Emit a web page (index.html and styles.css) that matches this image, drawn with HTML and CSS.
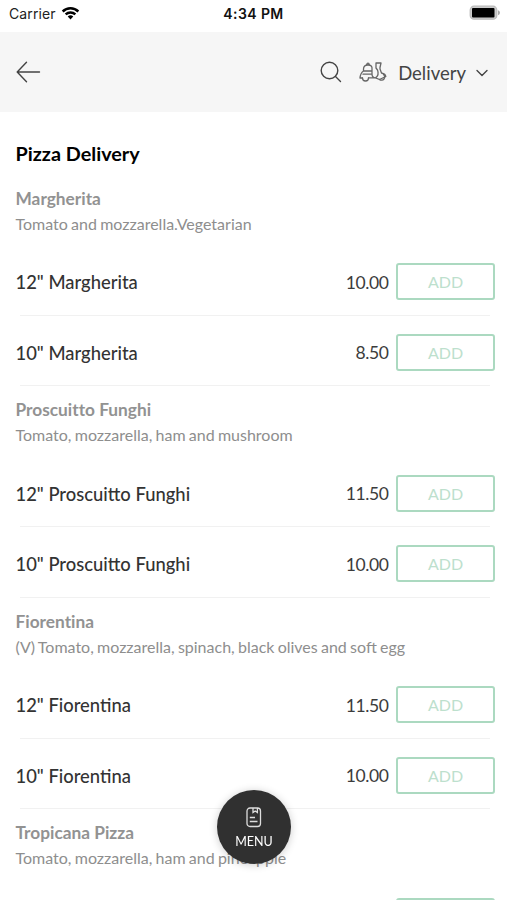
FILE: index.html
```html
<!DOCTYPE html>
<html lang="en">
<head>
<meta charset="utf-8">
<title>Pizza Delivery</title>
<link rel="stylesheet" href="styles.css">
</head>
<body>
<div class="status">
  <div class="carrier"><span>Carrier</span>
    <svg width="19" height="14" viewBox="0 0 18 14"><path d="M0.3 4.6A12.3 12.3 0 0 1 17.700 4.600L16 6.400A10 10 0 0 0 2 6.400ZM3.300 7.600A8.100 8.100 0 0 1 14.700 7.600L13 9.300A5.800 5.800 0 0 0 5 9.300ZM6.200 10.600A4 4 0 0 1 11.800 10.600L9 13.500Z"/></svg>
  </div>
  <div class="time">4:34 PM</div>
  <svg class="battery" width="32" height="16" viewBox="0 0 32 16"><rect x="1.200" y="1.200" width="26.600" height="13" rx="3.800" fill="#ccc" stroke="#bbb" stroke-width="1.200"/><rect x="3" y="3" width="22.500" height="9.600" rx="1"/><path d="M29 5.200Q31 6 31 7.700T29 10.200Z" fill="#aaa"/></svg>
</div>
<header class="bar">
  <svg class="back" width="26" height="22" viewBox="0 0 26 22"><path d="M23.500 11H1.500M10.500 1.200L1.200 11L10.500 20.800"/></svg>
  <svg class="search" width="22" height="22" viewBox="0 0 22 22"><circle cx="9.500" cy="9.500" r="8.300"/><path d="M15.500 15.500L20.500 20.500"/></svg>
  <svg class="scooter" width="28" height="20" viewBox="0 0 28 20"><path d="M4.500 9V7Q4.500 3 9 3T13 7V9ZM7.800 2.800Q7.800 1.200 9 1.200T10.200 2.800M4.500 9H13V12Q13 15.800 16.500 15.800Q20.500 13 18.500 8L17 6V1H22L21 5.500V7L22.500 11Q26.500 12 26.800 14.500L20.500 17.500L16.500 15.800H9.500M4.500 9Q1.500 11 1 16H3.500M4 12.200H12.500"/><path d="M3.500 16A3 3 0 0 0 9.500 16M20.500 17.500A3.100 3.100 0 1 0 24.500 12.500"/></svg>
  <span class="mode">Delivery</span>
  <svg class="chev" width="14" height="10" viewBox="0 0 14 10"><path d="M2 2.500L7 7.500L12 2.500"/></svg>
</header>
<main>
  <h1>Pizza Delivery</h1>
  <section>
    <div class="head"><h2>Margherita</h2><p>Tomato and mozzarella.Vegetarian</p></div>
    <div class="row"><span class="name">12" Margherita</span><span class="price">10.00</span><button>ADD</button></div>
    <div class="row"><span class="name">10" Margherita</span><span class="price">8.50</span><button>ADD</button></div>
  </section>
  <section>
    <div class="head"><h2>Proscuitto Funghi</h2><p>Tomato, mozzarella, ham and mushroom</p></div>
    <div class="row"><span class="name">12" Proscuitto Funghi</span><span class="price">11.50</span><button>ADD</button></div>
    <div class="row"><span class="name">10" Proscuitto Funghi</span><span class="price">10.00</span><button>ADD</button></div>
  </section>
  <section>
    <div class="head"><h2>Fiorentina</h2><p>(V) Tomato, mozzarella, spinach, black olives and soft egg</p></div>
    <div class="row"><span class="name">12" Fiorentina</span><span class="price">11.50</span><button>ADD</button></div>
    <div class="row"><span class="name">10" Fiorentina</span><span class="price">10.00</span><button>ADD</button></div>
  </section>
  <section>
    <div class="head"><h2>Tropicana Pizza</h2><p>Tomato, mozzarella, ham and pineapple</p></div>
    <div class="row"><span class="name"></span><span class="price"></span><button></button></div>
  </section>
</main>
<div class="menu">
  <svg width="16" height="21" viewBox="0 0 16 21"><rect x="1" y="1" width="13.500" height="18.500" rx="3"/><path d="M7 1V5.500L9.200 4L11.400 5.500V1M3.800 10.500H9M3.800 14.500H11.500"/></svg>
  <span>MENU</span>
</div>
</body>
</html>
```
FILE: styles.css
```css
* { box-sizing: border-box; }
body { margin: 0; height: 900px; overflow: hidden; background: #fff; font-family: Lato, sans-serif; color: #333; }
svg { display: block; flex: none; }
.status { height: 32px; display: grid; grid-template-columns: 1fr auto 1fr; padding: 0 7px 5px 9px; align-items: center; font-family: Inter, sans-serif; }
.carrier { display: flex; align-items: center; gap: 5px; font-size: 14px; letter-spacing: .1px; color: #222; }
.carrier svg { margin-top: -2px; fill: #000; }
.time { font-size: 14px; font-weight: 600; letter-spacing: .4px; margin-left: -2px; color: #111; }
.battery { justify-self: end; margin: -1px -1px 0 0; }
.bar { height: 80px; background: #f6f6f6; display: flex; align-items: center; padding: 0 18px 0 16px; }
.bar svg { fill: none; stroke: #444; stroke-width: 1.4; stroke-linecap: round; stroke-linejoin: round; }
.bar .search { margin-left: auto; }
.bar .scooter { margin-left: 17px; stroke: #666; stroke-width: 1.3; }
.mode { margin-left: 11px; margin-top: 1px; font-size: 18.500px; color: #444; }
.bar .chev { margin-left: 9px; margin-top: 2px; }
main { height: 788px; overflow: hidden; padding: 0 12px 0 15.500px; }
h1 { margin: 0; height: 62.700px; padding-top: 29px; line-height: 24px; font-size: 19.800px; font-weight: 700; color: #000; }
.head { height: 70.500px; padding-top: 12px; }
h2 { margin: 0; font-size: 17.300px; line-height: 24px; font-weight: 700; font-variant-ligatures: none; color: #929292; }
.head p { margin: 2px 0 0; font-size: 16px; line-height: 22px; word-spacing: -.85px; color: #8e8e8e; white-space: nowrap; }
.row { height: 70.500px; display: flex; align-items: center; padding-top: 3px; background: linear-gradient(#f1f1f1, #f1f1f1) 4px 100% / calc(100% - 9px) 1px no-repeat; }
.name { flex: 1; font-size: 18.400px; font-weight: 500; padding-top: 1px; color: #333; }
.price { font-size: 17.500px; letter-spacing: -.4px; color: #3c3c3c; padding-top: 1px; margin-right: 7.500px; }
button { width: 99px; height: 37px; padding: 0; border: 2px solid #abd9c0; border-radius: 3px; background: #fff; color: #bde0cd; font-family: inherit; font-size: 16px; }
.menu { position: fixed; left: 217px; top: 790px; width: 74px; height: 74px; border-radius: 50%; background: #303030; color: #fff; box-shadow: 0 1px 8px rgba(0,0,0,.2); display: flex; flex-direction: column; align-items: center; padding-top: 17px; font-size: 12.500px; }
.menu svg { fill: none; stroke: #ddd; stroke-width: 1.3; }
.menu span { margin-top: 6px; line-height: 16px; }
```
